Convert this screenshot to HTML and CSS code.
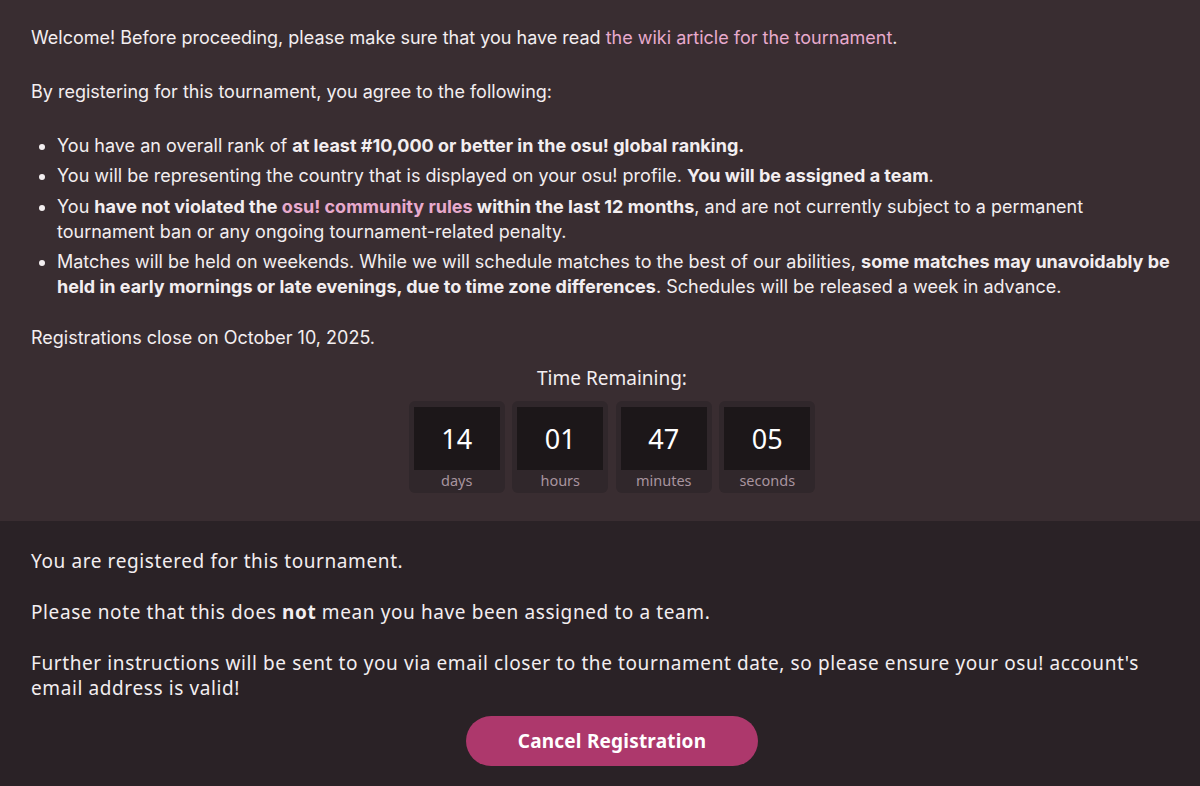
FILE: index.html
```html
<!DOCTYPE html>
<html lang="en">
<head>
<meta charset="utf-8">
<title>Tournament Registration</title>
<link rel="stylesheet" href="styles.css">
</head>
<body>
<section class="info">
  <p>Welcome! Before proceeding, please make sure that you have read <a href="#" class="link">the wiki article for the tournament</a>.</p>
  <p>By registering for this tournament, you agree to the following:</p>
  <ul class="rules">
    <li>You have an overall rank of <strong>at least #10,000 or better in the osu! global ranking.</strong></li>
    <li>You will be representing the country that is displayed on your osu! profile. <strong>You will be assigned a team</strong>.</li>
    <li>You <strong>have not violated the <a href="#" class="link">osu! community rules</a> within the last 12 months</strong>, and are not currently subject to a permanent tournament ban or any ongoing tournament-related penalty.</li>
    <li>Matches will be held on weekends. While we will schedule matches to the best of our abilities, <strong>some matches may unavoidably be held in early mornings or late evenings, due to time zone differences</strong>. Schedules will be released a week in advance.</li>
  </ul>
  <p class="close-date">Registrations close on October 10, 2025.</p>
  <div class="countdown">
    <div class="countdown-title">Time Remaining:</div>
    <div class="countdown-boxes">
      <div class="unit"><div class="num">14</div><div class="label">days</div></div>
      <div class="unit"><div class="num">01</div><div class="label">hours</div></div>
      <div class="unit"><div class="num">47</div><div class="label">minutes</div></div>
      <div class="unit"><div class="num">05</div><div class="label">seconds</div></div>
    </div>
  </div>
</section>
<section class="status">
  <p>You are registered for this tournament.</p>
  <p>Please note that this does <strong>not</strong> mean you have been assigned to a team.</p>
  <p class="last">Further instructions will be sent to you via email closer to the tournament date, so please ensure your osu! account's email address is valid!</p>
  <div class="actions">
    <button class="cancel-btn" type="button">Cancel Registration</button>
  </div>
</section>
</body>
</html>
```

FILE: styles.css
```css
* { box-sizing: border-box; }

html, body {
  margin: 0;
  padding: 0;
  background: #2a2226;
  color: #f3eef0;
}

.info {
  background: #392d31;
  padding: 24.5px 7px 28px 31px;
  font-family: Inter, "Liberation Sans", sans-serif;
  font-size: 18px;
  line-height: 25px;
}

.info p {
  margin: 0 0 29px 0;
}

.info strong { font-weight: 700; }

.link {
  color: #e8aacd;
  text-decoration: none;
}

.rules {
  margin: 0 0 26px 0;
  padding-left: 26px;
  padding-right: 15px;
}

.rules li + li {
  margin-top: 5.5px;
}

.info .close-date {
  margin-bottom: 0;
}

.countdown {
  display: flex;
  flex-direction: column;
  align-items: center;
  margin-top: 16px;
  font-family: "Noto Sans", sans-serif;
}

.countdown-title {
  font-size: 19px;
  line-height: 25px;
  margin-bottom: 10px;
}

.countdown-boxes {
  display: flex;
  gap: 7.5px;
}

.unit {
  width: 96px;
  height: 92px;
  background: #30272b;
  border-radius: 6px;
  padding: 6px 5px 0 5px;
  display: flex;
  flex-direction: column;
  align-items: center;
}

.num {
  width: 86px;
  height: 63px;
  background: #1c1719;
  display: flex;
  align-items: center;
  justify-content: center;
  font-size: 27px;
  color: #ffffff;
}

.label {
  font-size: 14.5px;
  line-height: 21px;
  color: #a8949f;
}

.status {
  padding: 27.5px 7px 20px 31px;
  font-family: "Noto Sans", sans-serif;
  font-size: 19px;
  letter-spacing: 0.6px;
  line-height: 25px;
}

.status p {
  margin: 0 25px 26px 0;
}

.status .last {
  margin-bottom: 15.5px;
}

.status strong { font-weight: 700; }

.actions {
  display: flex;
  justify-content: center;
}

.cancel-btn {
  width: 292px;
  height: 50px;
  border: none;
  border-radius: 25px;
  background: #ad386c;
  color: #ffffff;
  font-family: "Noto Sans", sans-serif;
  font-size: 19px;
  font-weight: 700;
  letter-spacing: 0.2px;
  cursor: pointer;
}
```
